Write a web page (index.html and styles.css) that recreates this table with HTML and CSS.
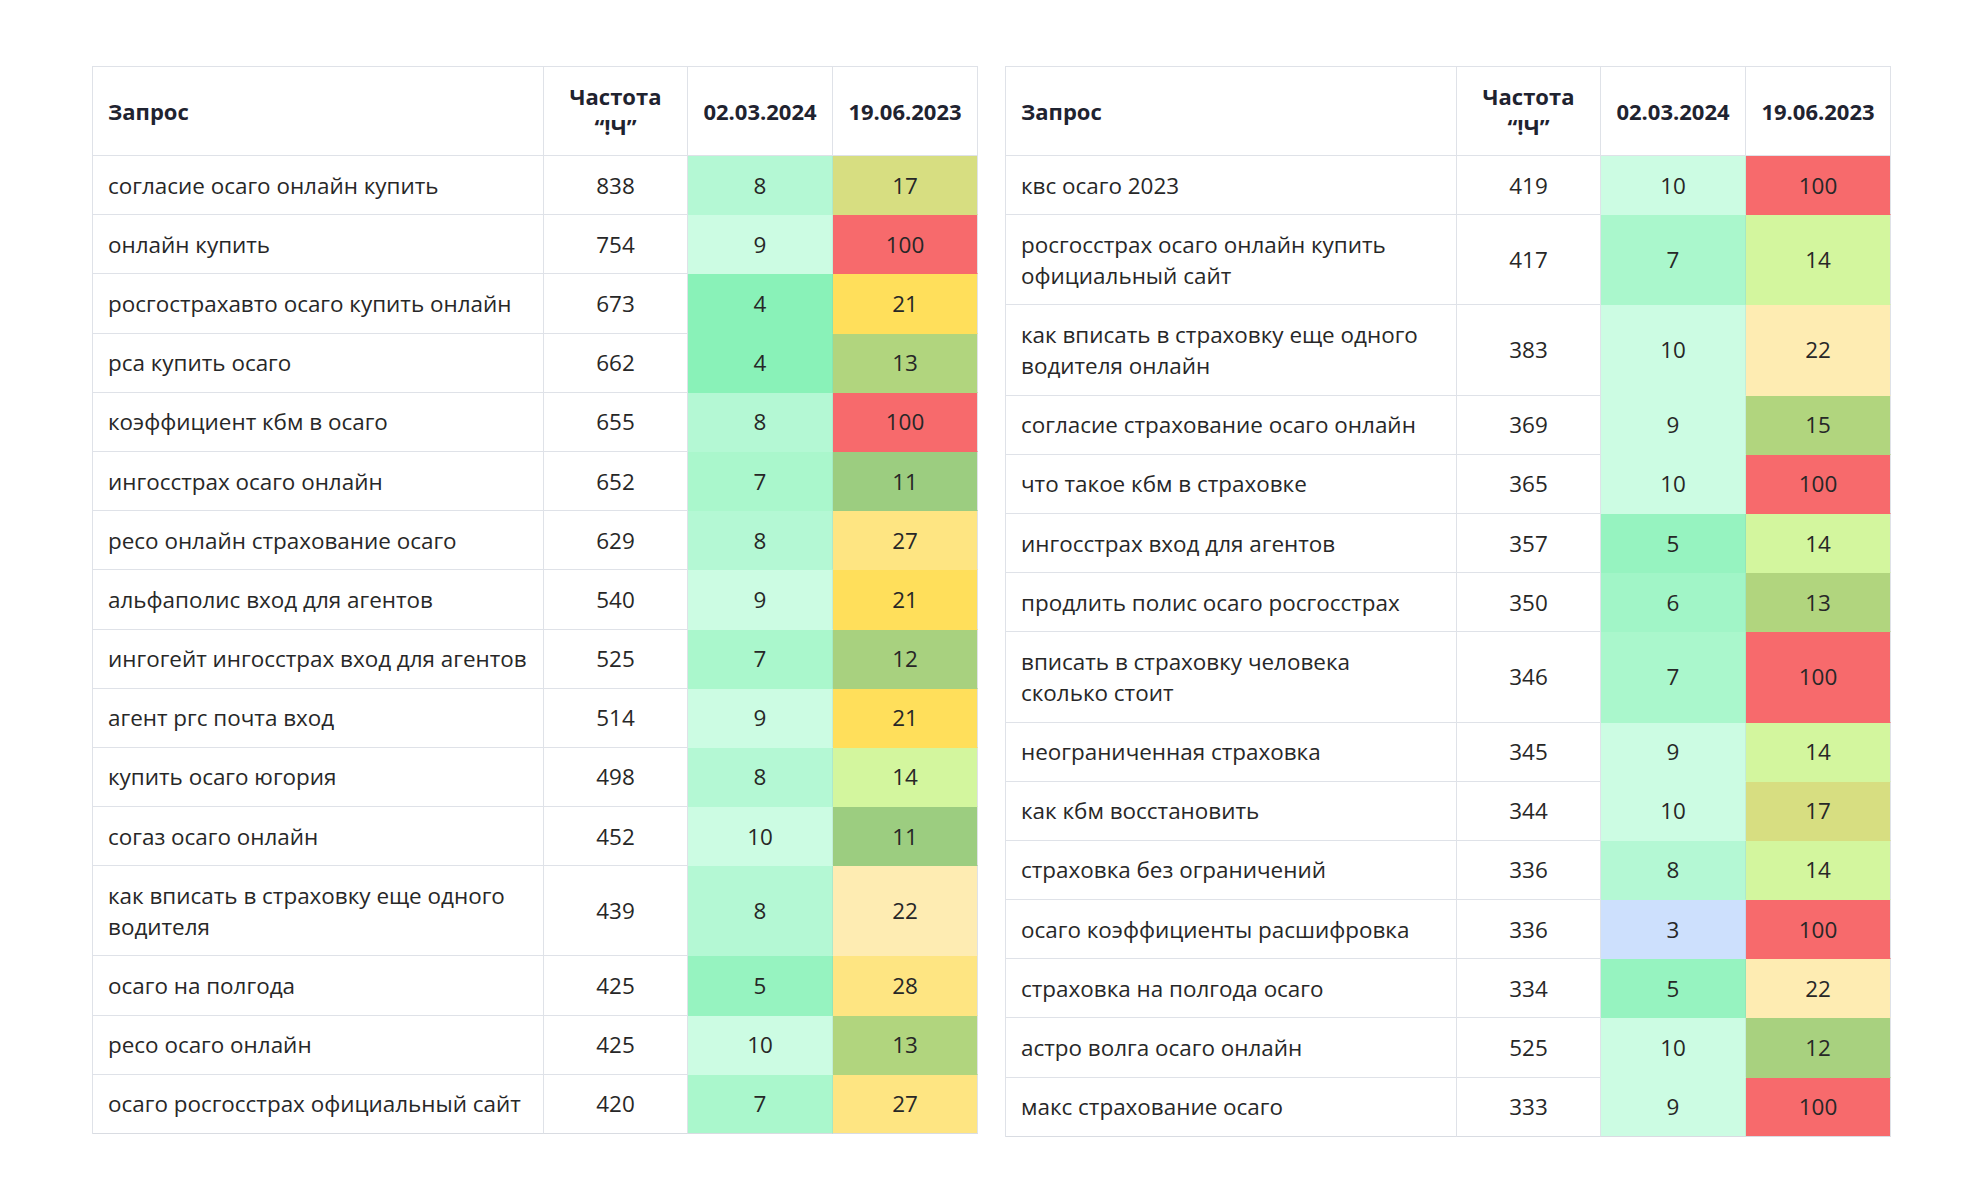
FILE: index.html
```html
<!DOCTYPE html>
<html lang="ru">
<head>
<meta charset="utf-8">
<title>Позиции запросов</title>
<link rel="stylesheet" href="styles.css">
</head>
<body>
<div class="page">
  <table class="grid">
    <colgroup><col class="c-q"><col class="c-f"><col class="c-d"><col class="c-d"></colgroup>
    <thead>
      <tr><th class="q">Запрос</th><th>Частота<br>“!Ч”</th><th>02.03.2024</th><th>19.06.2023</th></tr>
    </thead>
    <tbody>
      <tr><td class="q">согласие осаго онлайн купить</td><td>838</td><td class="g8">8</td><td class="y17">17</td></tr>
      <tr><td class="q">онлайн купить</td><td>754</td><td class="g9">9</td><td class="r100">100</td></tr>
      <tr><td class="q">росгострахавто осаго купить онлайн</td><td>673</td><td class="g4">4</td><td class="y21">21</td></tr>
      <tr><td class="q">рса купить осаго</td><td>662</td><td class="g4">4</td><td class="o13">13</td></tr>
      <tr><td class="q">коэффициент кбм в осаго</td><td>655</td><td class="g8">8</td><td class="r100">100</td></tr>
      <tr><td class="q">ингосстрах осаго онлайн</td><td>652</td><td class="g7">7</td><td class="o11">11</td></tr>
      <tr><td class="q">ресо онлайн страхование осаго</td><td>629</td><td class="g8">8</td><td class="y27">27</td></tr>
      <tr><td class="q">альфаполис вход для агентов</td><td>540</td><td class="g9">9</td><td class="y21">21</td></tr>
      <tr><td class="q">ингогейт ингосстрах вход для агентов</td><td>525</td><td class="g7">7</td><td class="o12">12</td></tr>
      <tr><td class="q">агент ргс почта вход</td><td>514</td><td class="g9">9</td><td class="y21">21</td></tr>
      <tr><td class="q">купить осаго югория</td><td>498</td><td class="g8">8</td><td class="l14">14</td></tr>
      <tr><td class="q">согаз осаго онлайн</td><td>452</td><td class="g9">10</td><td class="o11">11</td></tr>
      <tr><td class="q">как вписать в страховку еще одного водителя</td><td>439</td><td class="g8">8</td><td class="y22">22</td></tr>
      <tr><td class="q">осаго на полгода</td><td>425</td><td class="g5">5</td><td class="y27">28</td></tr>
      <tr><td class="q">ресо осаго онлайн</td><td>425</td><td class="g9">10</td><td class="o13">13</td></tr>
      <tr><td class="q">осаго росгосстрах официальный сайт</td><td>420</td><td class="g7">7</td><td class="y27">27</td></tr>
    </tbody>
  </table>
  <table class="grid">
    <colgroup><col class="c-q"><col class="c-f"><col class="c-d"><col class="c-d"></colgroup>
    <thead>
      <tr><th class="q">Запрос</th><th>Частота<br>“!Ч”</th><th>02.03.2024</th><th>19.06.2023</th></tr>
    </thead>
    <tbody>
      <tr><td class="q">квс осаго 2023</td><td>419</td><td class="g9">10</td><td class="r100">100</td></tr>
      <tr><td class="q">росгосстрах осаго онлайн купить официальный сайт</td><td>417</td><td class="g7">7</td><td class="l14">14</td></tr>
      <tr><td class="q">как вписать в страховку еще одного водителя онлайн</td><td>383</td><td class="g9">10</td><td class="y22">22</td></tr>
      <tr><td class="q">согласие страхование осаго онлайн</td><td>369</td><td class="g9">9</td><td class="o13">15</td></tr>
      <tr><td class="q">что такое кбм в страховке</td><td>365</td><td class="g9">10</td><td class="r100">100</td></tr>
      <tr><td class="q">ингосстрах вход для агентов</td><td>357</td><td class="g5">5</td><td class="l14">14</td></tr>
      <tr><td class="q">продлить полис осаго росгосстрах</td><td>350</td><td class="g6">6</td><td class="o13">13</td></tr>
      <tr><td class="q">вписать в страховку человека сколько стоит</td><td>346</td><td class="g7">7</td><td class="r100">100</td></tr>
      <tr><td class="q">неограниченная страховка</td><td>345</td><td class="g9">9</td><td class="l14">14</td></tr>
      <tr><td class="q">как кбм восстановить</td><td>344</td><td class="g9">10</td><td class="y17">17</td></tr>
      <tr><td class="q">страховка без ограничений</td><td>336</td><td class="g8">8</td><td class="l14">14</td></tr>
      <tr><td class="q">осаго коэффициенты расшифровка</td><td>336</td><td class="b3">3</td><td class="r100">100</td></tr>
      <tr><td class="q">страховка на полгода осаго</td><td>334</td><td class="g5">5</td><td class="y22">22</td></tr>
      <tr><td class="q">астро волга осаго онлайн</td><td>525</td><td class="g9">10</td><td class="o12">12</td></tr>
      <tr><td class="q">макс страхование осаго</td><td>333</td><td class="g9">9</td><td class="r100">100</td></tr>
    </tbody>
  </table>
</div>
</body>
</html>
```

FILE: styles.css
```css
html, body {
  margin: 0;
  padding: 0;
  background: #ffffff;
}

body {
  font-family: "Open Sans", "Noto Sans", sans-serif;
  color: #272727;
}

.page {
  display: flex;
  align-items: flex-start;
  gap: 27px;
  padding: 66px 0 0 92px;
}

.grid {
  width: 886px;
  table-layout: fixed;
  border-collapse: separate;
  border-spacing: 0;
  border-top: 1px solid #dfe2e8;
  border-left: 1px solid #dfe2e8;
}

.c-q { width: 451px; }
.c-f { width: 144px; }
.c-d { width: 145px; }

.grid th,
.grid td {
  border-right: 1px solid #dfe2e8;
  border-bottom: 1px solid #dfe2e8;
  text-align: center;
  vertical-align: middle;
}

.grid th {
  padding: 14px 12px;
  font-size: 22px;
  line-height: 30px;
  font-weight: 700;
  color: #1f2330;
  background: #ffffff;
}

.grid td {
  padding: 13.6px 12px;
  font-size: 22.45px;
  line-height: 31px;
  font-weight: 400;
}

.grid th.q,
.grid td.q {
  text-align: left;
  padding-left: 15px;
  padding-right: 14px;
}

/* heat cells: no horizontal rules, faint vertical divider */
.grid td.g4, .grid td.g5, .grid td.g6, .grid td.g7, .grid td.g8, .grid td.g9, .grid td.b3,
.grid td.y17, .grid td.y21, .grid td.y22, .grid td.y27, .grid td.o11, .grid td.o12,
.grid td.o13, .grid td.l14, .grid td.r100 {
  border-bottom-color: transparent;
  border-right-color: rgba(120, 130, 140, 0.12);
}

.grid tbody tr:last-child td {
  border-bottom-color: #d9dce2;
}

.grid td:last-child {
  border-right-color: #dfe2e8;
}

.g4 { background: #89f2b8; }
.g5 { background: #96f3c0; }
.g6 { background: #a1f5c7; }
.g7 { background: #aaf7cc; }
.g8 { background: #b4f8d4; }
.g9 { background: #ccfce3; }
.b3 { background: #cde0fd; }

.y17 { background: #d7de81; }
.y21 { background: #ffdf5b; }
.y22 { background: #feecb2; }
.y27 { background: #fee582; }
.o11 { background: #9ccd80; }
.o12 { background: #a8d17f; }
.o13 { background: #b1d57e; }
.l14 { background: #d3f69e; }
.r100 { background: #f76a6c; }
```
